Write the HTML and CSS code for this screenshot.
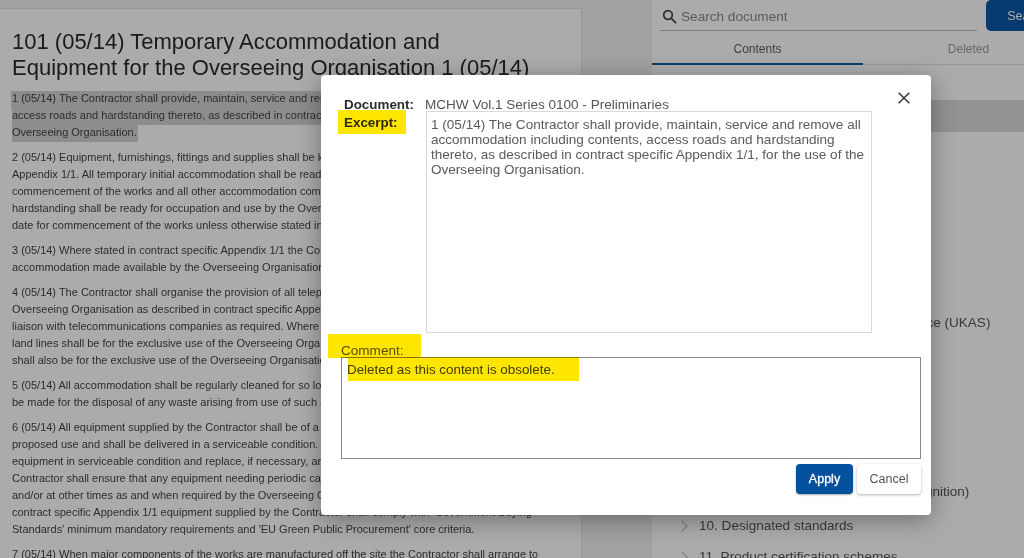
FILE: index.html
```html
<!DOCTYPE html>
<html lang="en">
<head>
<meta charset="utf-8">
<title>Document</title>
<link rel="stylesheet" href="styles.css">
</head>
<body>
<div class="app">
  <main class="doc">
    <h1>101 (05/14) Temporary Accommodation and<br>Equipment for the Overseeing Organisation 1 (05/14)</h1>
    <p><mark>1 (05/14) The Contractor shall provide, maintain, service and remove all accommodation including contents,<br>access roads and hardstanding thereto, as described in contract specific Appendix 1/1, for the use of the<br>Overseeing Organisation.</mark></p>
    <p>2 (05/14) Equipment, furnishings, fittings and supplies shall be kept in good order<br>Appendix 1/1. All temporary initial accommodation shall be ready for occupation<br>commencement of the works and all other accommodation complete with access<br>hardstanding shall be ready for occupation and use by the Overseeing Organisation<br>date for commencement of the works unless otherwise stated in Appendix 1/1.</p>
    <p>3 (05/14) Where stated in contract specific Appendix 1/1 the Contractor shall provide<br>accommodation made available by the Overseeing Organisation.</p>
    <p>4 (05/14) The Contractor shall organise the provision of all telephone services for the<br>Overseeing Organisation as described in contract specific Appendix 1/1 and shall<br>liaison with telecommunications companies as required. Where<br>land lines shall be for the exclusive use of the Overseeing Organisation<br>shall also be for the exclusive use of the Overseeing Organisation.</p>
    <p>5 (05/14) All accommodation shall be regularly cleaned for so long as required<br>be made for the disposal of any waste arising from use of such accommodation.</p>
    <p>6 (05/14) All equipment supplied by the Contractor shall be of a type suitable for its<br>proposed use and shall be delivered in a serviceable condition.<br>equipment in serviceable condition and replace, if necessary, any<br>Contractor shall ensure that any equipment needing periodic calibration<br>and/or at other times as and when required by the Overseeing Organisation.<br>contract specific Appendix 1/1 equipment supplied by the Contractor shall comply with 'Government Buying<br>Standards' minimum mandatory requirements and 'EU Green Public Procurement' core criteria.</p>
    <p>7 (05/14) When major components of the works are manufactured off the site the Contractor shall arrange to</p>
  </main>
  <aside class="side">
    <div class="search">
      <div class="search-field">
        <svg class="search-icon" viewBox="0 0 16 16" aria-hidden="true"><circle cx="6.4" cy="6.4" r="4.6"/><path d="M9.9 9.9 15 15"/></svg>
        <span>Search document</span>
      </div>
      <button class="search-btn">Search</button>
    </div>
    <div class="tabs">
      <div class="tab active">Contents</div>
      <div class="tab">Deleted</div>
    </div>
    <div class="band"></div>
    <ul class="toc">
      <li></li>
      <li></li>
      <li></li>
      <li class="chev">4. United Kingdom Accreditation Service (UKAS)</li>
      <li></li>
      <li></li>
      <li></li>
      <li></li>
      <li class="chev">9. Construction products (mutual recognition)</li>
      <li class="chev">10. Designated standards</li>
      <li class="chev last">11. Product certification schemes</li>
    </ul>
  </aside>
</div>
<div class="overlay"></div>
<section class="modal">
  <button class="close" aria-label="Close"><svg viewBox="0 0 12 12" aria-hidden="true"><path d="M.7.7l10.6 10.6M11.300.7.7 11.300"/></svg></button>
  <div class="doc-row"><strong>Document:</strong><span>MCHW Vol.1 Series 0100 - Preliminaries</span></div>
  <div class="excerpt-row">
    <strong class="excerpt-label">Excerpt:</strong>
    <div class="excerpt">1 (05/14) The Contractor shall provide, maintain, service and remove all accommodation including contents, access roads and hardstanding thereto, as described in contract specific Appendix 1/1, for the use of the Overseeing Organisation.</div>
  </div>
  <div class="comment-label">Comment:</div>
  <div class="comment">Deleted as this content is obsolete.</div>
  <div class="actions">
    <button class="apply">Apply</button>
    <button class="cancel">Cancel</button>
  </div>
  <i class="hl hl-excerpt"></i>
  <i class="hl hl-comment"></i>
  <i class="hl hl-text"></i>
</section>
</body>
</html>
```
FILE: styles.css
```css
* { box-sizing: border-box; }
html, body { margin: 0; height: 558px; overflow: hidden; }
body { font-family: "Liberation Sans", Arial, sans-serif; background: #f0f0f0; position: relative; }
.app { display: flex; width: 1024px; height: 558px; overflow: hidden; }

.doc { flex: 0 0 582px; min-width: 0; margin: 8px 70px 0 0; padding: 20px 11px 0 12px; background: #fff; border: 1px solid #e4e4e4; border-width: 1px 1px 0 0; height: 620px; color: #444; }
.doc h1 { margin: 0 0 9px; font-size: 22px; line-height: 26px; font-weight: 400; color: #2a2a2a; white-space: nowrap; }
.doc p { margin: 0 0 8px; font-size: 11px; line-height: 17px; white-space: nowrap; }
.doc mark { background: #d2d2d2; color: inherit; padding: 1px 1px 4px; margin-left: -1px; }

.side { flex: 0 0 422px; min-width: 0; background: #fff; color: #4a4a4a; height: 620px; }
.search { display: flex; align-items: flex-start; gap: 9px; padding-left: 8px; height: 31px; }
.search-field { flex: 0 0 317px; height: 31px; display: flex; align-items: center; gap: 4px; padding: 2px 0 0 2px; border-bottom: 1px solid #bbb; font-size: 13.600px; color: #8a8a8a; }
.search-icon { width: 15px; height: 15px; fill: none; stroke: #444; stroke-width: 1.800; }
.search-btn { width: 80px; height: 31px; border: 0; background: #0a58a8; color: #fff; font: 12.500px "Liberation Sans", Arial, sans-serif; border-radius: 5px; padding: 0 0 0 2px; }
.tabs { display: flex; height: 34px; border-bottom: 1px solid #e4e4e4; }
.tab { flex: 0 0 211px; text-align: center; font-size: 12px; line-height: 37px; color: #9c9c9c; }
.tab.active { color: #5c5c5c; height: 34px; border-bottom: 2px solid #0f5a9c; }
.band { height: 32px; margin-top: 35px; background: #dcdcdc; }
.toc { list-style: none; margin: 80px 0 0; padding: 0 0 0 47px; font-size: 13.550px; color: #555; }
.toc li { position: relative; height: 33.800px; line-height: 20px; white-space: nowrap; }
.toc .last { margin-top: -3px; }
.chev::before { content: ""; position: absolute; left: -21px; top: 6px; width: 7px; height: 7px; border: solid #bbb; border-width: 1.500px 1.500px 0 0; transform: rotate(45deg); }

.overlay { position: absolute; inset: 0; background: rgba(0, 0, 0, .33); }

.modal { position: absolute; left: 321px; top: 75px; width: 610px; height: 440px; padding: 22px 10px 0 20px; background: #fff; border-radius: 4px; box-shadow: 0 5px 24px rgba(0, 0, 0, .35); color: #555; font-size: 13.550px; }
.close { position: absolute; left: 577px; top: 17px; width: 12px; height: 12px; padding: 0; border: 0; background: none; }
.close svg { display: block; width: 12px; height: 12px; fill: none; stroke: #333; stroke-width: 1.500; }
.doc-row { display: flex; height: 14px; line-height: 15px; padding-left: 3px; }
.doc-row strong, .excerpt-label { color: #2c2c2c; font-size: 13.400px; }
.doc-row strong { width: 81px; }
.excerpt-row { display: flex; height: 222px; padding-left: 3px; }
.excerpt-label { width: 82px; padding-top: 4px; line-height: 15px; }
.excerpt { width: 446px; height: 222px; padding: 5px 4px; border: 1px solid #d9d9d9; line-height: 15px; color: #5a5a5a; }
.comment-label { margin-top: 11px; height: 13px; line-height: 14px; color: #555; }
.comment { width: 580px; height: 102px; padding: 4px 5px; border: 1px solid #8a8a8a; line-height: 15px; color: #444; font-size: 13.400px; }
.actions { display: flex; justify-content: flex-end; gap: 4px; margin-top: 5px; width: 580px; }
.actions button { height: 30px; border: 0; border-radius: 4px; font: 12.500px "Liberation Sans", Arial, sans-serif; padding: 0; }
.apply { width: 57px; background: #05519e; color: #fff; -webkit-text-stroke: .3px #fff; box-shadow: 0 1px 2px rgba(0, 0, 0, .35); }
.cancel { width: 64px; background: #fff; color: #555; box-shadow: 0 1px 3px rgba(0, 0, 0, .3); }

.hl { position: absolute; background: #ffe600; mix-blend-mode: multiply; }
.hl-excerpt { left: 17px; top: 35px; width: 68px; height: 24px; }
.hl-comment { left: 7px; top: 259px; width: 93px; height: 24px; }
.hl-text { left: 27px; top: 282px; width: 231px; height: 24px; }
```
